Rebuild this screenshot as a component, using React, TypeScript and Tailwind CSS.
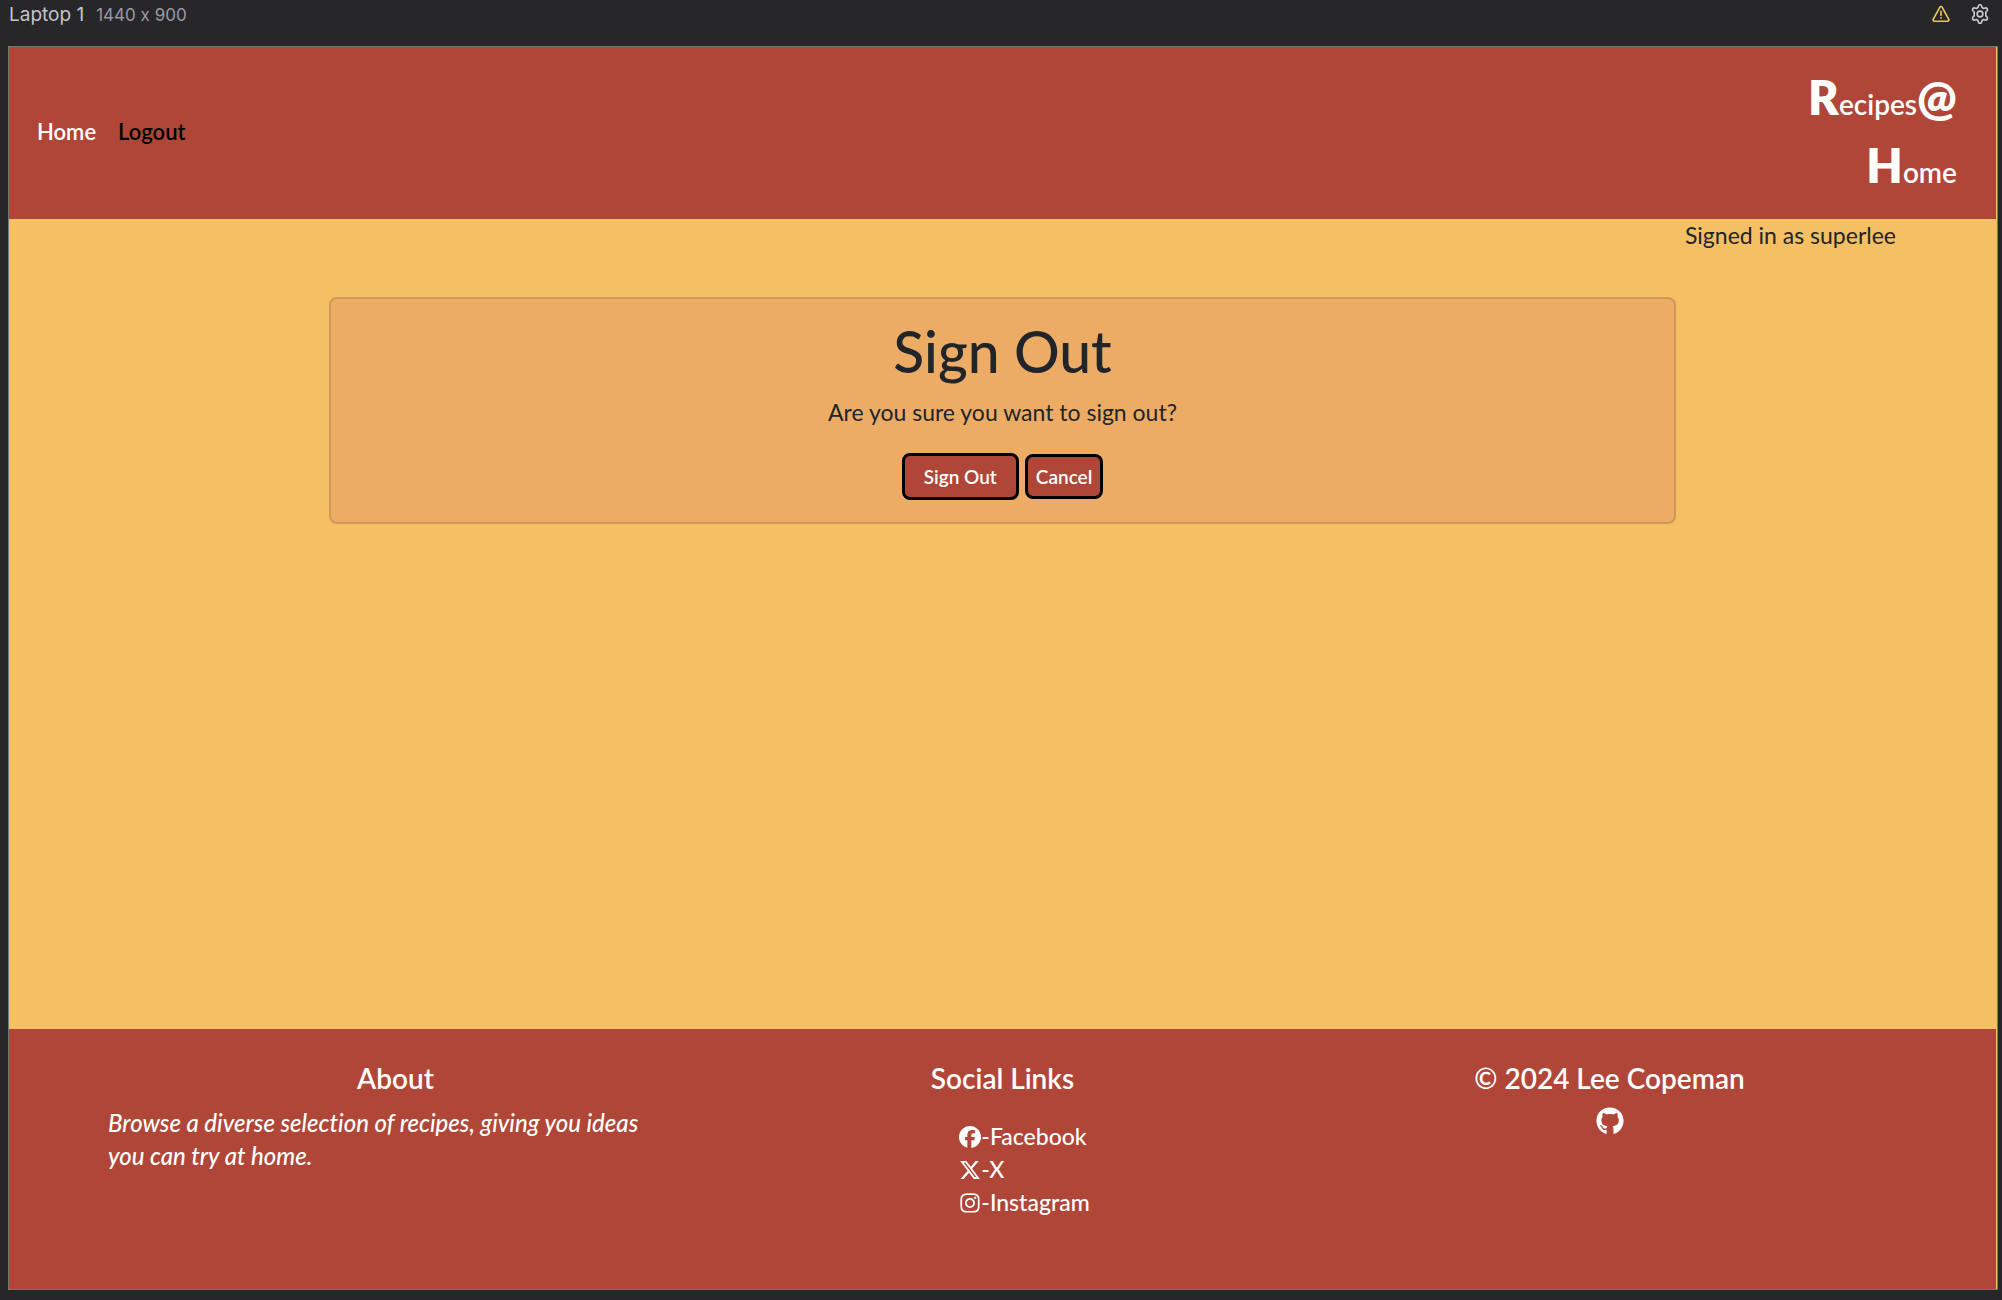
import type { ReactNode } from "react";
import { FaGithub, FaFacebook, FaXTwitter, FaInstagram } from "react-icons/fa6";

function WarningIcon() {
  return (
    <svg width="18" height="18" viewBox="0 0 18 18" fill="none" stroke="#efc75e" strokeWidth="1.6" strokeLinecap="round" strokeLinejoin="round" aria-hidden="true">
      <path d="M7.9 2.1a1.25 1.25 0 0 1 2.2 0l6.7 12.3a1.25 1.25 0 0 1-1.1 1.8H2.3a1.25 1.25 0 0 1-1.1-1.8z" />
      <path d="M9 6.2v4.2M9 12.9v.3" />
    </svg>
  );
}

function GearIcon() {
  return (
    <svg width="20" height="20" viewBox="0.8 0.200 18.400 19.600" fill="none" stroke="#c9c9cb" strokeWidth="1.6" strokeLinejoin="round" aria-hidden="true">
      <path d="M8.4 2.2Q8.7.9 10 .9t1.6 1.3l.4 1.5 1.5.9 1.500-.5q1.300-.3 2 .8t-.2 2.200L15.700 8.200v3.600l1.100 1.100q.9 1.100.2 2.200t-2 .8l-1.500-.5-1.500.9-.4 1.500q-.3 1.300-1.600 1.300t-1.600-1.300L8 16.300l-1.500-.9-1.500.5q-1.300.3-2-.8t.2-2.200l1.100-1.100V8.200L3.200 7.100Q2.300 6 3 4.900t2-.8l1.500.5L8 3.700z" />
      <circle cx="10" cy="10" r="2.800" />
    </svg>
  );
}

function FrameBar() {
  return (
    <div className="flex h-[46px] items-start justify-between pt-[3px] pr-3 pl-[9px] font-['Inter',sans-serif] [font-feature-settings:'calt'_0]">
      <div className="flex items-baseline gap-3 leading-6">
        <span className="text-[19px] text-[#c4c4c6]">Laptop 1</span>
        <span className="text-[17px] text-[#9a99a5]">1440 x 900</span>
      </div>
      <div className="flex h-[22px] items-center gap-5">
        <button type="button" aria-label="Warnings"><WarningIcon /></button>
        <button type="button" aria-label="Settings"><GearIcon /></button>
      </div>
    </div>
  );
}

function Big({ children }: { children: ReactNode }) {
  return <span className="text-[47px] leading-none font-extrabold">{children}</span>;
}

function Header() {
  return (
    <header className="flex items-center justify-between bg-[#b04638] pr-[39px] pl-7">
      <nav className="flex gap-[22px] pb-[3px] text-[22px] font-semibold">
        <a href="#home" className="text-white">Home</a>
        <a href="#logout" className="text-black">Logout</a>
      </nav>
      <a href="#home" className="pt-[23px] pb-[13px] text-right text-[28px] leading-[68px] font-semibold text-white">
        <Big>R</Big>ecipes<Big>@</Big>
        <br />
        <Big>H</Big>ome
      </a>
    </header>
  );
}

function SignOutCard() {
  return (
    <section className="mx-auto mt-[45px] w-[1347px] max-w-full rounded-lg border-2 border-[#cf9758] bg-[#edac66] px-4 pt-[19px] pb-[22px] text-center">
      <h1 className="text-[57px] leading-[66px] font-medium">Sign Out</h1>
      <p className="mt-3 text-[23px] leading-[33px]">Are you sure you want to sign out?</p>
      <form className="mt-6 flex items-center justify-center gap-[6px] text-[19px] leading-[29px] font-semibold text-white" onSubmit={(e) => e.preventDefault()}>
        <button type="submit" className="rounded-lg border-3 border-black bg-[#b04638] px-[19px] py-[6px]">Sign Out</button>
        <button type="button" className="rounded-lg border-3 border-black bg-[#b04638] px-2 py-[5px]">Cancel</button>
      </form>
    </section>
  );
}

function Footer() {
  return (
    <footer className="grid h-[260px] grid-cols-3 bg-[#b04638] px-[83px] pt-[33px] text-center text-[23px] leading-[33px] font-medium text-white">
      <div className="px-4">
        <h2 className="text-[28px] font-semibold">About</h2>
        <p className="mt-[11px] text-left text-[24px] italic [font-variant-ligatures:none]">
          Browse a diverse selection of recipes, giving you ideas<br />you can try at home.
        </p>
      </div>
      <div>
        <h2 className="text-[28px] font-semibold">Social Links</h2>
        <ul className="mt-[25px] inline-block pl-11 text-left">
          <li><a href="#facebook" className="flex items-center"><FaFacebook className="size-[22px]" />-Facebook</a></li>
          <li><a href="#x" className="flex items-center"><FaXTwitter className="size-[22px]" />-X</a></li>
          <li><a href="#instagram" className="flex items-center"><FaInstagram className="size-[22px]" />-Instagram</a></li>
        </ul>
      </div>
      <div>
        <h2 className="text-[28px] font-semibold">© 2024 Lee Copeman</h2>
        <a href="#github" aria-label="GitHub" className="mt-3 inline-block"><FaGithub className="size-[28px]" /></a>
      </div>
    </footer>
  );
}

export default function App() {
  return (
    <div className="flex min-h-screen flex-col bg-[#272729]">
      <FrameBar />
      <div className="mr-1 mb-[10px] ml-2 flex flex-1 flex-col border border-[#777] bg-[#f5bf63] pr-px font-['Lato',sans-serif] text-[#212529]">
        <Header />
        <main className="flex-1">
          <p className="pr-[100px] text-right text-[23px] leading-[33px]">Signed in as superlee</p>
          <SignOutCard />
        </main>
        <Footer />
      </div>
    </div>
  );
}
